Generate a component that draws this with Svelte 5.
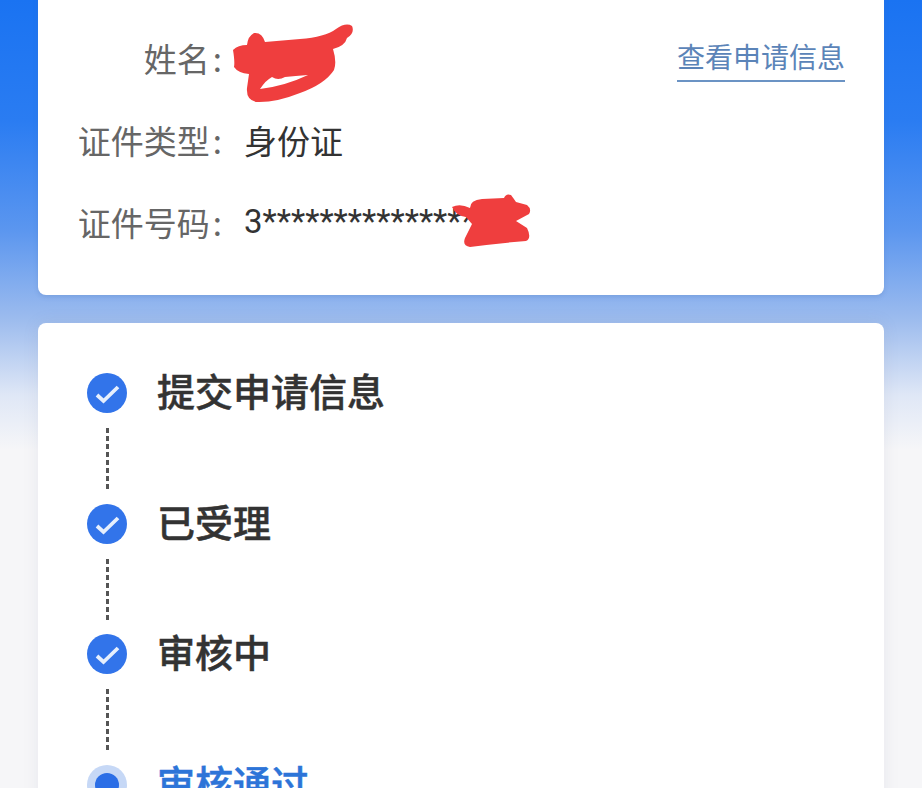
<script>
  const fields = [
    { label: '姓名', value: '' },
    { label: '证件类型', value: '身份证' },
    { label: '证件号码', value: '3***************' }
  ];

  const steps = [
    { title: '提交申请信息', done: true },
    { title: '已受理', done: true },
    { title: '审核中', done: true },
    { title: '审核通过', done: false }
  ];
</script>

<div class="page">
  <section class="card info">
    <a class="link" href="#apply">查看申请信息</a>
    {#each fields as field}
      <div class="row">
        <span class="label">{field.label}<span class="colon">:</span></span>
        <span class="value">{field.value}</span>
      </div>
    {/each}

    <svg class="scribbles" width="922" height="300" viewBox="0 0 922 300" aria-hidden="true">
      <path
        fill="#ef3e3e"
        fill-rule="evenodd"
        d="M233 50 Q238 45 247 45 Q248 36 254 33 Q262 32 265 42 L300 39 Q325 37 336 29 Q346 22 352 26 Q355 33 347 38 Q345 46 333 49 Q337 62 334 70 Q325 84 300 93 Q275 103 256 102 Q246 100 247 88 L249 74 Q238 73 234 67 Q235 62 233 50 Z M260 89 Q285 86 308 75 Q295 76 285 77 Q278 81 272 77 Q266 80 260 89 Z"
      />
      <path
        fill="#ef3e3e"
        d="M452 207 Q460 203 470 208 Q470 200 482 199 L504 198 Q506 193 511 195 Q514 199 516 202 L527 205 Q532 209 529 214 L516 221 L527 228 Q532 238 526 241 Q500 243 470 247 Q462 246 465 238 L472 224 L466 217 Q456 216 452 207 Z"
      />
    </svg>
  </section>

  <section class="card progress">
    {#each steps as step, i}
      <div class="step">
        <div class="track">
          {#if step.done}
            <svg class="dot" width="40" height="40" viewBox="0 0 40 40" aria-hidden="true">
              <circle cx="20" cy="20" r="20" fill="#3274ea" />
              <path d="M10 22 L16.5 28 L31 14" fill="none" stroke="#e6effd" stroke-width="3.8" />
            </svg>
          {:else}
            <span class="current"><span></span></span>
          {/if}
          {#if i < steps.length - 1}
            <span class="line"></span>
          {/if}
        </div>
        <h3 class:active={!step.done}>{step.title}</h3>
      </div>
    {/each}
  </section>
</div>

<style>
  :global(body) {
    margin: 0;
    overflow: hidden;
  }

  .page {
    height: 788px;
    overflow: hidden;
    padding: 0 38px;
    box-sizing: border-box;
    background: linear-gradient(180deg, #1a73f2 0, #2a7cf2 120px, #5b96ef 230px, #9dbcee 320px, #dfe7f6 395px, #f6f6f8 450px);
    font-family: 'Noto Sans CJK SC', 'Roboto', sans-serif;
  }

  .card {
    background: #fff;
    border-radius: 8px;
    position: relative;
  }

  .info {
    margin-top: -20px;
    padding: 39px 0 30px;
    box-shadow: 0 2px 4px rgba(70, 110, 180, 0.25);
  }

  .link {
    position: absolute;
    top: 56px;
    right: 39px;
    color: #5b84b8;
    font-size: 28px;
    line-height: 40px;
    padding-bottom: 4px;
    border-bottom: 2px solid #6b93c4;
    text-decoration: none;
  }

  .row {
    height: 82px;
    box-sizing: border-box;
    padding-bottom: 5px;
    display: flex;
    align-items: center;
    font-size: 33px;
  }

  .label {
    width: 184px;
    flex-shrink: 0;
    text-align: right;
    color: #666;
  }

  .colon {
    margin-left: 3px;
  }

  .value {
    margin-left: 22px;
    color: #333;
    font-family: 'Roboto', 'Noto Sans CJK SC', sans-serif;
    white-space: nowrap;
  }

  .scribbles {
    position: absolute;
    left: -38px;
    top: 20px;
    pointer-events: none;
  }

  .progress {
    margin-top: 28px;
    padding: 50px 0 0 49px;
    box-shadow: 0 0 16px rgba(120, 130, 160, 0.12);
  }

  .step {
    display: flex;
    align-items: flex-start;
    gap: 30px;
    height: 130.5px;
  }

  .track {
    width: 40px;
    display: flex;
    flex-direction: column;
    align-items: center;
  }

  .dot {
    display: block;
  }

  .current {
    width: 40px;
    height: 40px;
    border-radius: 50%;
    background: #c6d8f6;
    display: flex;
    align-items: center;
    justify-content: center;
  }

  .current span {
    width: 24px;
    height: 24px;
    border-radius: 50%;
    background: #2b6ee6;
  }

  .line {
    width: 3px;
    height: 62px;
    margin-top: 15px;
    background: repeating-linear-gradient(180deg, #555 0, #555 5px, transparent 5px, transparent 8px);
  }

  h3 {
    margin: 0;
    font-size: 38px;
    line-height: 34px;
    font-weight: 500;
    -webkit-text-stroke: 0.5px currentColor;
    color: #333;
  }

  h3.active {
    color: #2d74d8;
  }
</style>
